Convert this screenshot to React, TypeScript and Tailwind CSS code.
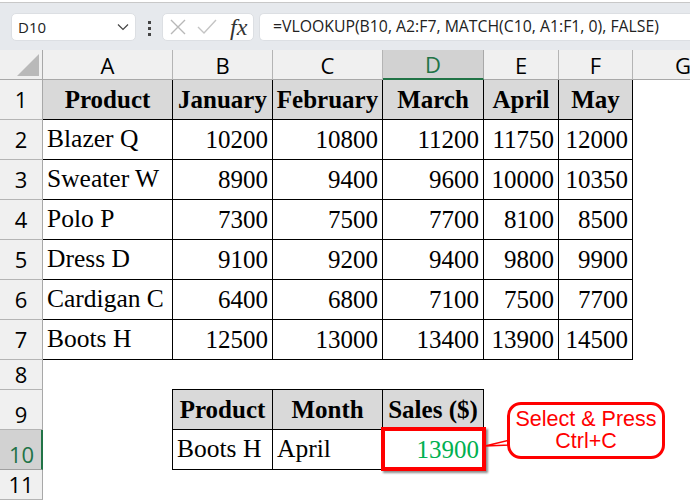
import React from "react";

const serif = "font-['Liberation_Serif',serif]";
const ui = "font-['Open_Sans','Noto_Sans',sans-serif]";

const colW = [130, 100, 110, 101, 75, 74];
const cols = ["A", "B", "C", "D", "E", "F"];
const header = ["Product", "January", "February", "March", "April", "May"];
const rows: (string | number)[][] = [
  ["Blazer Q", 10200, 10800, 11200, 11750, 12000],
  ["Sweater W", 8900, 9400, 9600, 10000, 10350],
  ["Polo P", 7300, 7500, 7700, 8100, 8500],
  ["Dress D", 9100, 9200, 9400, 9800, 9900],
  ["Cardigan C", 6400, 6800, 7100, 7500, 7700],
  ["Boots H", 12500, 13000, 13400, 13900, 14500],
];

function RowHead({ n, h, active, bottom }: { n: number; h: string; active?: boolean; bottom?: boolean }) {
  return (
    <div
      className={`${h} w-[43px] shrink-0 flex justify-center text-[22px] leading-[30px] border-b border-r ${ui} ${
        bottom ? "items-end" : "items-center pb-[2px]"
      } ${
        active
          ? "bg-[#d2d2d2] text-[#217346] border-b-[#a0a0a0] border-r-[2px] border-r-[#217346] pl-[2px]"
          : "bg-[#f0f0f0] text-black border-b-[#b4b4b4] border-r-[#a8a8a8]"
      }`}
    >
      {n}
    </div>
  );
}

function Cell({
  w,
  children,
  head,
  right,
}: {
  w: number;
  children: React.ReactNode;
  head?: boolean;
  right?: boolean;
}) {
  return (
    <div
      style={{ width: w }}
      className={`h-full shrink-0 border-r border-b border-black flex items-center whitespace-nowrap overflow-hidden ${serif} ${
        head
          ? "bg-[#d9d9d9] font-bold justify-center text-[25px]"
          : right
            ? "justify-end pr-[4px] text-[25px]"
            : "justify-start pl-[4px] text-[25.5px]"
      }`}
    >
      {children}
    </div>
  );
}

export default function App() {
  return (
    <div className="relative w-[690px] h-[501px] overflow-hidden bg-white text-black">
      {/* formula bar */}
      <div className="h-[50px] bg-[#e6e9ed] relative">
        <div className="h-[2px] bg-white" />
        <div className="h-[1px] bg-[#c8c8c8]" />
        <div className="absolute left-[11px] top-[13px] w-[125px] h-[28px] bg-white rounded-[5px] border border-[#dcdfe3] flex items-center justify-between pl-[6px] pr-[6px]">
          <span className={`${ui} text-[15px] text-[#222]`}>D10</span>
          <svg width="12" height="8" viewBox="0 0 12 8" fill="none">
            <path d="M1 1.5 L6 6.5 L11 1.5" stroke="#444" strokeWidth="1.2" />
          </svg>
        </div>
        <div className="absolute left-[148px] top-[21px] flex flex-col gap-[3px]">
          <span className="w-[3px] h-[3px] bg-[#444]" />
          <span className="w-[3px] h-[3px] bg-[#444]" />
          <span className="w-[3px] h-[3px] bg-[#444]" />
        </div>
        <div className="absolute left-[162px] top-[13px] w-[92px] h-[28px] bg-white rounded-[5px] border border-[#dcdfe3] flex items-center">
          <svg width="18" height="18" viewBox="0 0 18 18" className="ml-[6px]" fill="none">
            <path d="M2 2 L16 16 M16 2 L2 16" stroke="#b8b8b8" strokeWidth="1.4" />
          </svg>
          <svg width="22" height="18" viewBox="0 0 22 18" className="ml-[9px]" fill="none">
            <path d="M2 9 L8 15 L20 2" stroke="#c4c4c4" strokeWidth="1.4" />
          </svg>
          <span className="ml-[12px] font-['Liberation_Serif',serif] italic text-[24px] leading-none text-[#333]">fx</span>
        </div>
        <div className={`absolute left-[259px] top-[13px] w-[431px] h-[28px] bg-white rounded-l-[5px] border-y border-l border-[#dcdfe3] flex items-center pl-[13px] text-[15.8px] text-[#222] whitespace-nowrap ${ui}`}>
          =VLOOKUP(B10, A2:F7, MATCH(C10, A1:F1, 0), FALSE)
        </div>
      </div>

      {/* column headers */}
      <div className="flex h-[30px]">
        <div className="w-[43px] shrink-0 bg-[#f0f0f0] border-r border-b border-[#a8a8a8] relative">
          <div className="absolute right-[3px] bottom-[3px] w-0 h-0 border-b-[22px] border-b-[#b9b9b9] border-l-[22px] border-l-transparent" />
        </div>
        {cols.map((c, i) => (
          <div
            key={c}
            style={{ width: colW[i] }}
            className={`shrink-0 flex items-center justify-center pt-[1px] text-[22px] border-r ${ui} ${
              c === "D"
                ? "bg-[#d2d2d2] text-[#217346] border-r-[#a8a8a8] border-b-[2px] border-b-[#217346]"
                : "bg-[#f0f0f0] border-b border-b-[#a8a8a8] border-r-[#b4b4b4]"
            }`}
          >
            {c}
          </div>
        ))}
        <div className={`w-[100px] shrink-0 bg-[#f0f0f0] border-b border-b-[#a8a8a8] flex items-center justify-center pt-[1px] text-[22px] ${ui}`}>G</div>
      </div>

      {/* rows 1-7 */}
      <div className="flex h-[40px]">
        <RowHead n={1} h="h-[40px]" />
        {header.map((t, i) => (
          <Cell key={t} w={colW[i]} head>
            {t}
          </Cell>
        ))}
      </div>
      {rows.map((r, ri) => (
        <div key={ri} className="flex h-[40px]">
          <RowHead n={ri + 2} h="h-[40px]" />
          {r.map((v, i) => (
            <Cell key={i} w={colW[i]} right={i > 0}>
              {v}
            </Cell>
          ))}
        </div>
      ))}

      {/* row 8 */}
      <div className="flex h-[30px]">
        <RowHead n={8} h="h-[30px]" />
      </div>

      {/* rows 9-10: lookup table */}
      <div className="flex h-[40px]">
        <RowHead n={9} h="h-[40px]" bottom />
        <div className="w-[130px] shrink-0 border-r border-black -mt-[1px] h-[41px]" />
        <div className="flex border-t border-black -mt-[1px] h-[41px]">
          <Cell w={100} head>Product</Cell>
          <Cell w={110} head>Month</Cell>
          <Cell w={101} head>Sales ($)</Cell>
        </div>
      </div>
      <div className="flex h-[40px]">
        <RowHead n={10} h="h-[40px]" active bottom />
        <div className="w-[130px] shrink-0 border-r border-black" />
        <Cell w={100}>Boots H</Cell>
        <Cell w={110}>April</Cell>
        <Cell w={101} right>
          <span className="text-[#00b050]">13900</span>
        </Cell>
      </div>
      <div className="flex h-[30px]">
        <RowHead n={11} h="h-[30px]" />
      </div>

      {/* red selection */}
      <div className="absolute left-[381px] top-[427px] w-[105px] h-[44px] border-[4px] border-[#ff0000] shadow-[2px_2px_2px_rgba(0,0,0,0.45)]" />

      {/* callout */}
      <svg className="absolute left-[484px] top-[400px]" width="30" height="50" viewBox="0 0 30 50" fill="none">
        <path d="M1 46 L26 40 L26 45 Z" fill="white" stroke="#ff0000" strokeWidth="1.4" />
      </svg>
      <div className="absolute left-[507px] top-[402px] w-[158px] h-[57px] rounded-[14px] border-[3px] border-[#ff0000] bg-white flex flex-col items-center justify-center pb-[1px] font-['Liberation_Sans',sans-serif] text-[#ff0000] text-[21.5px] leading-[22px]">
        <span>Select &amp; Press</span>
        <span>Ctrl+C</span>
      </div>
    </div>
  );
}
